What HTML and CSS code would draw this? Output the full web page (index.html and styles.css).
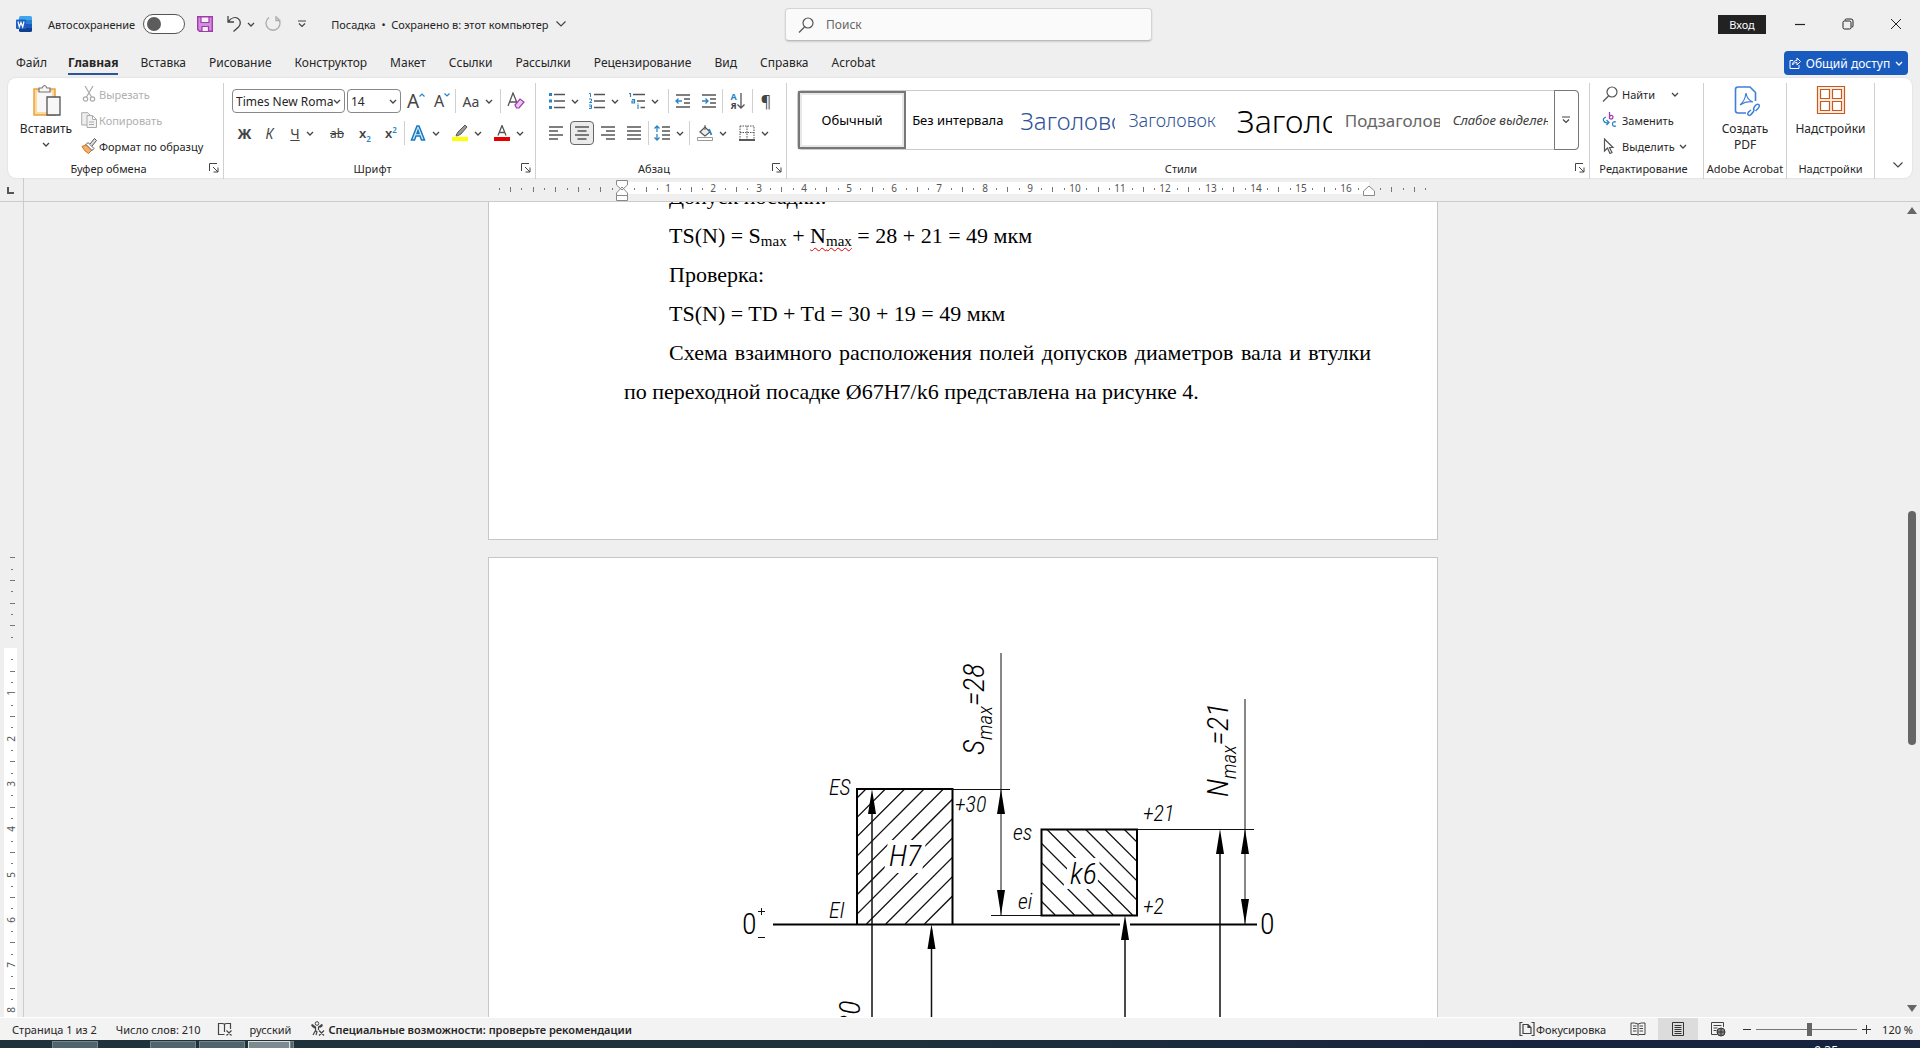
FILE: index.html
```
<!DOCTYPE html>
<html lang="ru">
<head>
<meta charset="utf-8">
<title>Посадка — Word</title>
<link rel="stylesheet" href="styles.css">
</head>
<body>
<svg class="defs" aria-hidden="true">
  <symbol id="chev" viewBox="0 0 8 5"><path d="M1 1l3 3 3-3" fill="none" stroke="#444" stroke-width="1.3"/></symbol>
  <symbol id="launch" viewBox="0 0 10 10"><path d="M.5 8V.5H8M4 4l5 5M9 4.500V9H4.500" fill="none" stroke="#444"/></symbol>
  <symbol id="lens" viewBox="0 0 16 16"><circle cx="10" cy="6" r="5" fill="none" stroke="#555" stroke-width="1.200"/><path d="M6.500 10L1 15.500" stroke="#555" stroke-width="1.300"/></symbol>
</svg>

<header class="titlebar">
  <svg class="ic16" viewBox="0 0 16 16"><path d="M3 1.500Q3 0 4.500 0h10Q16 0 16 1.500V5H3z" fill="#41a5ee"/><path d="M3 4h13v4H3z" fill="#2b7cd3"/><path d="M3 8h13v4H3z" fill="#185abd"/><path d="M3 12h13v2.500q0 1.500-1.500 1.500h-10Q3 16 3 14.500z" fill="#103f91"/><rect y="3.500" width="10" height="9.500" rx="1" fill="#1d5fc0"/><path d="M2 5.500l1.300 5.500L5 6.500 6.700 11 8 5.500" fill="none" stroke="#fff" stroke-width="1.200"/></svg>
  <label class="autosave">Автосохранение <input type="checkbox" class="toggle"></label>
  <button class="tb save" aria-label="Сохранить"><svg class="ic16" viewBox="0 0 16 16"><path d="M.7.700h14.600v14.600H2.500L.7 13.500z" fill="#d08fdc" stroke="#a03bab" stroke-width="1.400"/><path d="M4 1h8v5.500H4zM5 10.500h6.500v5H5z" fill="#f7f0f8" stroke="#a03bab" stroke-width="1.200"/></svg></button>
  <button class="tb undo" aria-label="Отменить"><svg class="ic16" viewBox="0 0 16 16"><path d="M2 0v6h6M2 6C5 2 9 .5 12 2.500s3 6 .5 8.500L7.500 15.500" fill="none" stroke="#444" stroke-width="1.300"/></svg><svg class="chev"><use href="#chev"/></svg></button>
  <button class="tb redo" aria-label="Повторить"><svg class="ic16" viewBox="0 0 16 16"><path d="M11 0v4.500h4.500M12 1.500A7 7 0 1 1 4 1.500" fill="none" stroke="#aaa" stroke-width="1.300"/></svg></button>
  <button class="tb custom" aria-label="Настройка панели"><svg class="ic8" viewBox="0 0 8 8"><path d="M0 1h8M1 3.500l3 3 3-3" fill="none" stroke="#444" stroke-width="1.200"/></svg></button>
  <button class="tb doc-title">Посадка&nbsp; •&nbsp; Сохранено в: этот компьютер <svg class="chev-lg" viewBox="0 0 10 6"><path d="M.5.500L5 5 9.500.500" fill="none" stroke="#444" stroke-width="1.200"/></svg></button>
  <label class="search"><svg class="ic16"><use href="#lens"/></svg><input type="text" placeholder="Поиск" aria-label="Поиск"></label>
  <div class="win">
    <button class="login">Вход</button>
    <button class="wbtn" aria-label="Свернуть"><svg class="ic12" viewBox="0 0 12 12"><path d="M1 6.500h10" stroke="#222" stroke-width="1.200"/></svg></button>
    <button class="wbtn" aria-label="Окно"><svg class="ic12" viewBox="0 0 12 12"><path d="M3 2.500V2Q3 1 4.500 1H9q2 0 2 2v5q0 1.200-1.500 1.200" fill="none" stroke="#222"/><rect x="1" y="3" width="8" height="8" rx="1.500" fill="none" stroke="#222"/></svg></button>
    <button class="wbtn" aria-label="Закрыть"><svg class="ic12" viewBox="0 0 12 12"><path d="M1 1l10 10M11 1L1 11" stroke="#222"/></svg></button>
  </div>
</header>

<nav class="tabs">
  <a href="#">Файл</a><a href="#" class="on">Главная</a><a href="#">Вставка</a><a href="#">Рисование</a><a href="#">Конструктор</a><a href="#">Макет</a><a href="#">Ссылки</a><a href="#">Рассылки</a><a href="#">Рецензирование</a><a href="#">Вид</a><a href="#">Справка</a><a href="#">Acrobat</a>
  <button class="share"><svg class="ic12" viewBox="0 0 12 12"><path d="M4 3.500H1v8h9V8M3.500 8c0-3 2-4.500 4.500-4.500V1l3.500 3.500L8 8V5.500C6 5.500 4.500 6 3.500 8z" fill="none" stroke="#fff"/></svg>Общий доступ<svg class="chev" viewBox="0 0 8 5"><path d="M1 1l3 3 3-3" fill="none" stroke="#fff" stroke-width="1.300"/></svg></button>
</nav>

<section class="ribbon">
  <div class="group">
    <div class="clip">
      <button class="big paste"><svg class="ic36" viewBox="0 0 36 36"><path d="M6 6h21v26H6z" fill="#fdd9a0" stroke="#e8a33d" stroke-width="1.500"/><path d="M9 9h15v20H9z" fill="#f7f7f7"/><path d="M11 9V5h3q2.500-5 5 0h3v4z" fill="#f5f5f5" stroke="#777" stroke-width="1.200"/><path d="M19 14h13v18H19z" fill="#f7f7f7" stroke="#555" stroke-width="1.300"/></svg><span>Вставить</span><svg class="chev"><use href="#chev"/></svg></button>
      <div class="stack">
        <button class="sm off"><svg class="ic16" viewBox="0 0 16 16"><path d="M4 0l6.500 11M12 0L5.500 11" stroke="#aaa" stroke-width="1.200"/><circle cx="4.500" cy="13" r="2.200" fill="none" stroke="#aaa" stroke-width="1.200"/><circle cx="11.500" cy="13" r="2.200" fill="none" stroke="#aaa" stroke-width="1.200"/></svg>Вырезать</button>
        <button class="sm off"><svg class="ic16" viewBox="0 0 16 16"><path d="M6 13H.7V.7H7L9 3" fill="#eee" stroke="#aaa"/><path d="M6 3.500h5.500l4 4V15.500H6zM11.500 3.500v4h4M8 10h5M8 12.500h5" fill="#f2f2f2" stroke="#aaa"/></svg>Копировать</button>
        <button class="sm"><svg class="ic16" viewBox="0 0 16 16"><path d="M1 8.500L7 6l5 5-4.500 4.500Q3 13 1 8.500z" fill="#f5b067" stroke="#d9731a"/><path d="M5 6.500l2-2 6 6-2 2z" fill="#fff" stroke="#555"/><path d="M9 6l4.500-5.500 2 2L11 8" fill="#ddd" stroke="#555"/></svg>Формат по образцу</button>
      </div>
    </div>
    <div class="cap"><span>Буфер обмена</span><button aria-label="Параметры буфера"><svg><use href="#launch"/></svg></button></div>
  </div>

  <div class="group">
    <div class="rows">
      <div class="row">
        <label class="combo font"><input type="text" value="Times New Roman" aria-label="Шрифт"><svg class="chev"><use href="#chev"/></svg></label>
        <label class="combo size"><input type="text" value="14" aria-label="Размер"><svg class="chev"><use href="#chev"/></svg></label>
        <button class="b w26" aria-label="Увеличить"><span class="l20">A</span><svg class="caret" viewBox="0 0 6 4"><path d="M.5 3.500L3 1l2.500 2.500" fill="none" stroke="#2b83c4" stroke-width="1.200"/></svg></button>
        <button class="b w26" aria-label="Уменьшить"><span class="l16">A</span><svg class="caret" viewBox="0 0 6 4"><path d="M.5.500L3 3 5.500.500" fill="none" stroke="#2b83c4" stroke-width="1.200"/></svg></button>
        <i class="sep"></i>
        <button class="b w44"><span class="l14">Aa</span><svg class="chev"><use href="#chev"/></svg></button>
        <i class="sep"></i>
        <button class="b w30" aria-label="Очистить"><svg class="ic18" viewBox="0 0 18 18"><path d="M1 14L6 1l4.500 11M3 10h6" fill="none" stroke="#555" stroke-width="1.300"/><path d="M8 13l5-6 4 3-5 6H9.500z" fill="#e9c6ef" stroke="#a03bab" stroke-width="1.200"/></svg></button>
      </div>
      <div class="row">
        <button class="b w25"><b class="l14">Ж</b></button>
        <button class="b w25"><em class="l14">К</em></button>
        <button class="b w40"><u class="l14">Ч</u><svg class="chev"><use href="#chev"/></svg></button>
        <button class="b w30"><s class="l12">ab</s></button>
        <button class="b w26"><span class="l13">x<sub>2</sub></span></button>
        <button class="b w26"><span class="l13">x<sup>2</sup></span></button>
        <i class="sep"></i>
        <button class="b w40" aria-label="Эффекты"><svg class="ic16" viewBox="0 0 16 16"><path d="M1.500 15L7 1h2l5.500 14h-3L10 11H6l-1.500 4zM7 8.500h2L8 5.500z" fill="#d4eafa" stroke="#1878be" stroke-width="1.500"/></svg><svg class="chev"><use href="#chev"/></svg></button>
        <button class="b w44" aria-label="Цвет выделения"><svg class="ic16" viewBox="0 0 16 16"><path d="M4 10.500L6 7l7-7 2 2-6 7-4 2z" fill="#999" stroke="#555"/><path d="M0 12h16v4H0z" fill="#ff0"/></svg><svg class="chev"><use href="#chev"/></svg></button>
        <button class="b w40" aria-label="Цвет текста"><svg class="ic16" viewBox="0 0 16 16"><path d="M4 10.500L8 .5l4 10M5.500 7.500h5" fill="none" stroke="#555" stroke-width="1.300"/><path d="M0 12h16v4H0z" fill="#e80000"/></svg><svg class="chev"><use href="#chev"/></svg></button>
      </div>
    </div>
    <div class="cap"><span>Шрифт</span><button aria-label="Параметры шрифта"><svg><use href="#launch"/></svg></button></div>
  </div>

  <div class="group">
    <div class="rows">
      <div class="row">
        <button class="b w40" aria-label="Маркеры"><svg class="ic16" viewBox="0 0 16 16"><path d="M0 0h3v3H0zM0 6.500h3v3H0zM0 13h3v3H0z" fill="#2b83c4"/><path d="M5 1.500h11M5 8h11M5 14.500h11" stroke="#555" stroke-width="1.300"/></svg><svg class="chev"><use href="#chev"/></svg></button>
        <button class="b w40" aria-label="Нумерация"><svg class="ic16" viewBox="0 0 16 16"><path d="M0 .5h1.500V4M0 6h2.500v2L.5 9.500h2.500M0 12h2.500v3.500H0M.5 13.700h2" fill="none" stroke="#2b83c4"/><path d="M5 1.500h11M5 8h11M5 14.500h11" stroke="#555" stroke-width="1.300"/></svg><svg class="chev"><use href="#chev"/></svg></button>
        <button class="b w40" aria-label="Многоуровневый список"><svg class="ic16" viewBox="0 0 16 16"><path d="M0 .5h1.500V4M3 6.500h2.500V10H3V8h2.500M9 12v4M9 10.500v1" fill="none" stroke="#2b83c4" stroke-width="1.200"/><path d="M4 1.500h12M8 8h8M11.500 14.500H16" stroke="#555" stroke-width="1.300"/></svg><svg class="chev"><use href="#chev"/></svg></button>
        <i class="sep gap"></i>
        <button class="b w26" aria-label="Уменьшить отступ"><svg class="ic16" viewBox="0 0 16 16"><path d="M1 2h14M9 6h6M9 10h6M1 14h14" stroke="#555" stroke-width="1.300"/><path d="M7 8H1M3.500 5.500L1 8l2.500 2.500" fill="none" stroke="#2b83c4" stroke-width="1.300"/></svg></button>
        <button class="b w26" aria-label="Увеличить отступ"><svg class="ic16" viewBox="0 0 16 16"><path d="M1 2h14M9 6h6M9 10h6M1 14h14" stroke="#555" stroke-width="1.300"/><path d="M1 8h6M4.500 5.500L7 8l-2.500 2.500" fill="none" stroke="#2b83c4" stroke-width="1.300"/></svg></button>
        <i class="sep"></i>
        <button class="b sort" aria-label="Сортировка"><span><b>А</b><b>Я</b></span><svg viewBox="0 0 8 16"><path d="M4 0v15M.5 11.500L4 15l3.500-3.500" fill="none" stroke="#555" stroke-width="1.300"/></svg></button>
        <i class="sep"></i>
        <button class="b w26"><span class="l16">¶</span></button>
      </div>
      <div class="row al">
        <button class="b w24" aria-label="По левому краю"><svg class="ic16" viewBox="0 0 16 16"><path d="M1 2h14M1 6h9M1 10h14M1 14h9" stroke="#555" stroke-width="1.300"/></svg></button>
        <button class="b w24 sel" aria-label="По центру"><svg class="ic16" viewBox="0 0 16 16"><path d="M1 2h14M3.500 6h9M1 10h14M3.500 14h9" stroke="#555" stroke-width="1.300"/></svg></button>
        <button class="b w24" aria-label="По правому краю"><svg class="ic16" viewBox="0 0 16 16"><path d="M1 2h14M6 6h9M1 10h14M6 14h9" stroke="#555" stroke-width="1.300"/></svg></button>
        <button class="b w24" aria-label="По ширине"><svg class="ic16" viewBox="0 0 16 16"><path d="M1 2h14M1 6h14M1 10h14M1 14h14" stroke="#555" stroke-width="1.300"/></svg></button>
        <i class="sep"></i>
        <button class="b w40" aria-label="Интервал"><svg class="ic16" viewBox="0 0 16 16"><path d="M8 2h8M8 6h8M8 10h8M8 14h8" stroke="#555" stroke-width="1.300"/><path d="M3 1v6M3 9v6M.5 3.500L3 1l2.500 2.500M.5 12.500L3 15l2.500-2.500" fill="none" stroke="#2b83c4" stroke-width="1.300"/></svg><svg class="chev"><use href="#chev"/></svg></button>
        <i class="sep"></i>
        <button class="b w44" aria-label="Заливка"><svg class="ic16" viewBox="0 0 16 16"><path d="M3 7l5-5 5 5-5 4z" fill="#eee" stroke="#555" stroke-width="1.200"/><path d="M8 0v5" stroke="#555"/><path d="M12 4l2.500 6" stroke="#2b83c4" stroke-width="1.800"/><path d="M.5 12.500h15v3H.5z" fill="#fff" stroke="#999"/></svg><svg class="chev"><use href="#chev"/></svg></button>
        <button class="b w40" aria-label="Границы"><svg class="ic16" viewBox="0 0 16 16"><path d="M1 1h14v13M1 1v13M8 1v13M1 7.500h14" fill="none" stroke="#555" stroke-dasharray="1.500 1"/><path d="M0 15h16" stroke="#222" stroke-width="1.500"/></svg><svg class="chev"><use href="#chev"/></svg></button>
      </div>
    </div>
    <div class="cap"><span>Абзац</span><button aria-label="Параметры абзаца"><svg><use href="#launch"/></svg></button></div>
  </div>

  <div class="group styles-group">
    <div class="gallery">
      <button class="st on"><span>Обычный</span></button>
      <button class="st"><span>Без интервала</span></button>
      <button class="st h1"><span>Заголовок</span></button>
      <button class="st h2"><span>Заголовок</span></button>
      <button class="st ttl"><span>Заголовок</span></button>
      <button class="st sub"><span>Подзаголовок</span></button>
      <button class="st em"><span>Слабое выделение</span></button>
      <button class="more" aria-label="Ещё"><svg class="ic8" viewBox="0 0 8 8"><path d="M0 1h8M1 3.500l3 3 3-3" fill="none" stroke="#444" stroke-width="1.200"/></svg></button>
    </div>
    <div class="cap"><span>Стили</span><button aria-label="Окно стилей"><svg><use href="#launch"/></svg></button></div>
  </div>

  <div class="group">
    <div class="stack edit">
      <button class="sm find"><svg class="ic16"><use href="#lens"/></svg>Найти<svg class="chev"><use href="#chev"/></svg></button>
      <button class="sm"><svg class="ic16" viewBox="0 0 16 16"><path d="M7.500 0v7M7.500 4.500q1-1.500 2.500-1 1.500.8.800 2.500T7.500 6.500" fill="none" stroke="#a03bab" stroke-width="1.300"/><path d="M4 5Q0 6.500 2 9.500q1.500 2 4.500 1M4.500 8l2.500 2.500L4.500 13M14 10q-3.500-1-3.500 2t3.500 2" fill="none" stroke="#2b83c4" stroke-width="1.300"/></svg>Заменить</button>
      <button class="sm"><svg class="ic16" viewBox="0 0 16 16"><path d="M2.500 1v12l3-3 2.500 5.500 2-1L7.500 9.500H11z" fill="#fff" stroke="#555" stroke-width="1.200"/></svg>Выделить<svg class="chev"><use href="#chev"/></svg></button>
    </div>
    <div class="cap plain"><span>Редактирование</span></div>
  </div>

  <div class="group">
    <button class="big pdf"><svg class="ic36" viewBox="0 0 36 36"><path d="M17 30H9q-2.500 0-2.500-2.500V6.500Q6.500 4 9 4h12l5.500 5.500V18" fill="none" stroke="#3f7fd6" stroke-width="1.600"/><path d="M11 22q5-4 6-12 1 7 7 9-6-1.500-13 3z" fill="none" stroke="#3f7fd6" stroke-width="1.200"/><path d="M22 27l-2.500 2q-2 3 1 3.500 1 0 4-4 1-2-.5-3M25 27q-1-1.500 1-4t3.500-1.500q2 1-.5 4l-2.500 2.500" fill="none" stroke="#3f7fd6" stroke-width="1.500"/></svg><span>Создать<br>PDF</span></button>
    <div class="cap wide"><span>Adobe Acrobat</span></div>
  </div>

  <div class="group">
    <button class="big"><svg class="ic36" viewBox="0 0 36 36"><path d="M4.500 3.500h27v27h-27z" fill="#fdebdd" stroke="#c55a22" stroke-width="1.200"/><path d="M7.500 6.500h9v9h-9zM19.500 6.500h9v9h-9zM7.500 18.500h9v9h-9zM19.500 18.500h9v9h-9z" fill="#fff" stroke="#c55a22" stroke-width="1.200"/></svg><span>Надстройки</span></button>
    <div class="cap wide"><span>Надстройки</span></div>
  </div>
  <div class="collapse"><button aria-label="Свернуть ленту"><svg class="chev-lg" viewBox="0 0 10 6"><path d="M.5.500L5 5 9.500.500" fill="none" stroke="#444" stroke-width="1.200"/></svg></button></div>
</section>

<div class="hruler">
  <div class="corner"><svg viewBox="0 0 8 8"><path d="M1 0v6h6" fill="none" stroke="#555" stroke-width="2"/></svg></div>
  <svg id="hr" class="hscale"></svg>
</div>

<main class="work">
  <svg id="vr" class="vruler"></svg>
  <div class="canvas">
    <article class="page first">
      <p>Допуск посадки:</p>
      <p>TS(N) = S<sub>max</sub> + <span class="typo">N<sub>max</sub></span> = 28 + 21 = 49 мкм</p>
      <p>Проверка:</p>
      <p>TS(N) = TD + Td = 30 + 19 = 49 мкм</p>
      <p>Схема взаимного расположения полей допусков диаметров вала и втулки по переходной посадке Ø67H7/k6 представлена на рисунке 4.</p>
    </article>
    <article class="page second">
      <svg class="scheme" viewBox="718 641 560 420" role="img" aria-label="Схема полей допусков">
        <defs>
          <clipPath id="ch"><path d="M857 789h95v135h-95z"/></clipPath>
          <clipPath id="ck"><path d="M1042 829h95v86h-95z"/></clipPath>
        </defs>
        <path id="hatchH" clip-path="url(#ch)" class="hatch"/>
        <path id="hatchK" clip-path="url(#ck)" class="hatch"/>
        <path d="M888 840h38l-4 33h-38zM1069 858h31l-3 31h-34z" fill="#fff"/>
        <path class="thick" d="M857 924V789h95.500v135M1041.500 829.500H1137v86h-95.500zM773 924.500h347M1130 924.500h127"/>
        <path class="thin" d="M952 789.500h58M1001 653v262M991 915.500h50M1137 829.500h117M1245 699v225"/>
        <path class="mid" d="M872 800v260M931.500 930v130M1125 925v135M1220 840v220"/>
        <path fill="#000" d="M872 789l4 25h-8zM1001 789l4 25h-8zM1001 915l4-25h-8zM931.500 924l4 25h-8zM1125 915l4 25h-8zM1220 829l4 25h-8zM1245 829l4 25h-8zM1245 924l4-25h-8z"/>
        <g class="s22">
          <text x="829" y="795">ES</text><text x="829" y="918">EI</text>
          <text x="955" y="812">+30</text><text x="1013" y="840">es</text><text x="1018" y="909">ei</text>
          <text x="1143" y="821">+21</text><text x="1143" y="914">+2</text>
        </g>
        <g class="s32">
          <text x="889" y="866">H7</text><text x="1070" y="884">k6</text>
          <text class="up" x="742" y="934">0</text><text class="up" x="1260" y="934">0</text>
          <text transform="translate(984 755) rotate(-90)">S<tspan class="ix" dy="8">max</tspan><tspan dy="-8">=28</tspan></text>
          <text transform="translate(1228 797) rotate(-90)">N<tspan class="ix" dy="8">max</tspan><tspan dy="-8">=21</tspan></text>
          <text transform="translate(860 1029) rotate(-90)">30</text>
        </g>
        <path class="thin" d="M758 911.500h7M761.500 908v7M758 937.500h7"/>
      </svg>
    </article>
  </div>
  <div class="scroll">
    <svg viewBox="0 0 10 7"><path d="M5 0l5 7H0z" fill="#666"/></svg>
    <i class="above"></i><i class="thumb"></i><i class="below"></i>
    <svg viewBox="0 0 10 7"><path d="M5 7l5-7H0z" fill="#666"/></svg>
  </div>
</main>

<footer class="status">
  <span class="s-page">Страница 1 из 2</span>
  <span class="s-words">Число слов: 210</span>
  <svg class="ic16" viewBox="0 0 16 16"><path d="M7.500 13.500H1.500v-11h4q2 0 2 1.500 0-1.500 2-1.500h4V8M7.500 4v7M9.500 9.500l5 5M14.500 9.500l-5 5" fill="none" stroke="#444" stroke-width="1.200"/></svg>
  <span class="s-lang">русский</span>
  <svg class="ic16" viewBox="0 0 16 16"><circle cx="7" cy="2.500" r="1.800" fill="none" stroke="#444"/><path d="M2 3.500L5.500 6v3.500L3 14M12 3.500L8.500 6v3M2 3.500Q1 5 5 7M12 3.500q1 1.500-2.500 3M5.500 9.500L7 11l-1 3M9 9.500l5 5M14 9.500l-5 5" fill="none" stroke="#444" stroke-width="1.200"/></svg>
  <b class="s-acc">Специальные возможности: проверьте рекомендации</b>
  <div class="right">
    <button class="focus"><svg class="ic16" viewBox="0 0 16 16"><path d="M3.500 1.500H1v13h2.500M12.500 14.500H15v-13h-2.500M4 3.500h5l3 3v6H4zM9 3.500v3h3" fill="none" stroke="#444" stroke-width="1.200"/></svg>Фокусировка</button>
    <button class="view" aria-label="Чтение"><svg class="ic16" viewBox="0 0 16 16"><path d="M8 3v11M8 3Q5 1.500 1 2v11.500h6l1 1 1-1h6V2q-4-.5-7 1M3 5h3.500M3 7.500h3.500M3 10h3.500M9.500 5H13M9.500 7.500H13M9.500 10H13" fill="none" stroke="#444"/></svg></button>
    <button class="view on" aria-label="Разметка"><svg class="ic16" viewBox="0 0 16 16"><path d="M2.500 1.500h11v13h-11zM4.500 4.500h7M4.500 6.500h7M4.500 8.500h7M4.500 10.500h7M4.500 12.500h7" fill="none" stroke="#333"/></svg></button>
    <button class="view" aria-label="Веб"><svg class="ic16" viewBox="0 0 16 16"><path d="M7 13.500H1.500v-12h12V6M3.500 4.500h8M3.500 7h4M3.500 9.500h3" fill="none" stroke="#444"/><circle cx="11" cy="11" r="4" fill="#888" stroke="#333"/><path d="M7 11h8M11 7v8" stroke="#333"/></svg></button>
    <button class="zb" aria-label="Мельче"><svg class="ic12" viewBox="0 0 12 12"><path d="M2 6.500h8" stroke="#333"/></svg></button>
    <input type="range" class="zoom" min="0" max="100" value="53" aria-label="Масштаб">
    <button class="zb" aria-label="Крупнее"><svg class="ic12" viewBox="0 0 12 12"><path d="M2 6.500h9M6.500 2v9" stroke="#333"/></svg></button>
    <span class="pct">120 %</span>
  </div>
</footer>
<div class="taskbar"><i></i><i></i><i></i><i class="cur"></i><i class="edge"></i><span>9:35</span></div>
<script src="rulers.js"></script>
</body>
</html>
```
FILE: rulers.js
```
// Draws the centimetre scales of the two rulers and the hatching of the tolerance zones.
(function () {
  var h = '<path d="M135 4h746v12H135z" fill="#fff"/>';
  var zero = 135, cm = 45.2;
  for (var q = -12; q <= 71; q++) {
    var x = Math.round(zero + q * cm / 4);
    if (q === 0 || q === 66) continue;
    if (q % 4 === 0 && q > 0 && q < 66) {
      h += '<text x="' + x + '" y="14" text-anchor="middle">' + q / 4 + '</text>';
    } else if (q % 2 === 0) {
      h += '<path d="M' + (x + 0.5) + ' 9v5"/>';
    } else {
      h += '<path d="M' + (x + 0.5) + ' 10v2"/>';
    }
  }
  h += '<g fill="#fff"><path d="M128.500 2.500h11V7L134 12l-5.500-5zM128.500 17.500V15L134 9l5.500 6v2.500zM128.500 17.500h11v5h-11zM875.500 17.500V13l5.500-5 5.500 5v4.500z"/></g>';
  document.getElementById('hr').innerHTML = h;

  var v = '<path d="M4 446h13v370H4z" fill="#fff"/>';
  var vz = 446, vcm = 45.3;
  for (q = -8; q <= 32; q++) {
    var y = Math.round(vz + q * vcm / 4);
    if (q === 0) continue;
    if (q % 4 === 0 && q > 0) {
      v += '<text transform="translate(15 ' + y + ') rotate(-90)" text-anchor="middle">' + q / 4 + '</text>';
    } else if (q % 2 === 0) {
      v += '<path d="M10 ' + (y + 0.5) + 'h5"/>';
    } else {
      v += '<path d="M11 ' + (y + 0.5) + 'h2"/>';
    }
  }
  document.getElementById('vr').innerHTML = v;

  var d = '', i;
  for (i = 0; i < 12; i++) {
    var c = 1655 + (i - 1) * 19.35;
    d += 'M' + (c - 924) + ' 924L' + (c - 789) + ' 789';
  }
  document.getElementById('hatchH').setAttribute('d', d);
  d = '';
  for (i = -5; i < 5; i++) {
    c = 217.5 + i * 19.35;
    d += 'M' + (c + 829) + ' 829l86 86';
  }
  document.getElementById('hatchK').setAttribute('d', d);
})();
```
FILE: styles.css
```
* { box-sizing: border-box; }
body { margin: 0; height: 100vh; display: flex; flex-direction: column; overflow: hidden; background: #efefef; color: #262626; font: 12px "Noto Sans", sans-serif; }
button { border: 0; background: none; padding: 0; margin: 0; font: inherit; color: inherit; display: inline-flex; align-items: center; }
input { font: inherit; color: inherit; }
a { color: inherit; text-decoration: none; }
svg { display: block; flex: none; }
.defs { position: absolute; width: 0; height: 0; }
.ic8 { width: 8px; height: 8px; }
.ic12 { width: 12px; height: 12px; }
.ic16 { width: 16px; height: 16px; }
.ic18 { width: 18px; height: 18px; }
.ic36 { width: 36px; height: 36px; }
.chev { width: 8px; height: 5px; }
.chev-lg { width: 10px; height: 6px; }

.titlebar { position: relative; height: 48px; flex: none; display: flex; align-items: center; padding-left: 16px; font-size: 11px; }
.autosave { display: flex; align-items: center; gap: 8px; margin-left: 16px; }
.toggle { appearance: none; width: 42px; height: 20px; margin: 0; border: 1px solid #555; border-radius: 10px; background: #fff; display: flex; align-items: center; padding-left: 3px; }
.toggle::before { content: ""; width: 14px; height: 14px; border-radius: 50%; background: #5c5c5c; }
.save { margin-left: 12px; }
.undo { margin-left: 13px; gap: 5px; }
.redo { margin-left: 10px; }
.custom { margin-left: 17px; }
.doc-title { margin-left: 25px; gap: 8px; }
.search { position: absolute; left: 50%; top: 8px; width: 367px; height: 33px; margin-left: -175px; background: #fafafa; border: 1px solid #d4d4d4; border-bottom-color: #bbb; border-radius: 4px; box-shadow: 0 1px 2px #0002; display: flex; align-items: center; padding: 0 12px; gap: 12px; font-size: 12px; }
.search input { border: 0; background: none; flex: 1; padding: 0; outline: 0; }
.search input::placeholder { color: #666; }
.win { margin-left: auto; display: flex; align-items: center; }
.login { width: 48px; height: 19px; justify-content: center; background: #222; color: #fff; margin-right: 10px; }
.wbtn { width: 48px; height: 32px; justify-content: center; }

.tabs { height: 30px; flex: none; display: flex; align-items: center; gap: 23px; padding: 0 12px 0 16px; }
.tabs a { line-height: 20px; margin-top: 2px; border-bottom: 2px solid transparent; }
.tabs .on { font-weight: 700; border-color: #2b579a; margin-left: -2px; margin-right: -1px; }
.share { margin-left: auto; width: 124px; height: 24px; justify-content: center; gap: 5px; background: #185abd; color: #fff; border-radius: 4px; }

.ribbon { flex: none; margin: 0 8px; height: 100px; background: #fff; border-radius: 8px; display: grid; grid-template-columns: 216px 312px 251px 1fr 114px 83px 88px 37px; box-shadow: 0 0 2px #0002; }
.group { display: flex; flex-direction: column; min-width: 0; margin: 5px 0; border-right: 1px solid #d0d0d0; }
.cap { display: grid; grid-template-columns: 1fr 14px; align-items: center; margin: auto 0 2px; height: 18px; font-size: 11px; }
.cap span { text-align: center; white-space: nowrap; }
.cap.plain { grid-template-columns: 1fr 6px; }
.cap.wide { display: flex; justify-content: center; }
.cap svg { width: 10px; height: 10px; }
.clip { display: flex; }
.big { flex-direction: column; line-height: 16px; text-align: center; white-space: nowrap; }
.big .ic36 { margin-bottom: 2px; }
.pdf .ic36 { margin-left: 4px; }
.paste { width: 70px; margin-left: 3px; }
.paste .chev { margin-top: 5px; }
.stack { display: flex; flex-direction: column; align-items: flex-start; margin-top: -2px; }
.sm { height: 26px; gap: 4px; white-space: nowrap; font-size: 11px; }
.clip .sm { gap: 2px; }
.find .chev { margin-left: 12px; }
.edit { padding-left: 12px; }
.off { color: #b0b0b0; }

.rows { display: flex; flex-direction: column; gap: 8px; padding: 6px 0 0 8px; }
.row { display: flex; height: 24px; align-items: center; }
.al .w24 { margin-right: 2px; }
.sep { width: 1px; height: 24px; background: #d0d0d0; flex: none; }
.gap { margin: 0 1px 0 4px; }
.combo { height: 24px; border: 1px solid #888; border-radius: 4px; display: flex; align-items: center; padding: 0 3px; }
.combo input { border: 0; padding: 0; outline: 0; background: none; flex: 1; min-width: 0; }
.font { width: 113px; margin-right: 2px; }
.size { width: 54px; margin-right: 2px; }
.b { height: 24px; justify-content: center; color: #444; flex: none; gap: 6px; }
.w24 { width: 24px; } .w25 { width: 25px; } .w26 { width: 26px; } .w30 { width: 30px; } .w40 { width: 40px; } .w44 { width: 44px; }
.sel { border: 1px solid #666; border-radius: 4px; background: #ebebeb; }
.caret { width: 6px; height: 4px; align-self: flex-start; margin: 4px 0 0 -6px; }
.l20 { font-size: 19px; } .l16 { font-size: 16px; } .l14 { font-size: 14px; } .l13 { font-size: 13px; font-weight: 600; } .l12 { font-size: 12px; }
.l13 sub, .l13 sup { font-size: 8px; line-height: 0; color: #2b83c4; }
.sort { width: 29px; gap: 0; }
.sort span { display: flex; flex-direction: column; font-size: 9px; line-height: 9px; }
.sort b:first-child { color: #2b83c4; }
.sort svg { width: 8px; height: 18px; }

.gallery { display: flex; height: 60px; margin: 7px 10px 0; border: 1px solid #ccc; border-radius: 4px; color: #000; font-size: 13px; }
.st { flex: 1 1 108px; min-width: 0; padding: 0 7px 0 6px; }
.st span { display: block; width: 100%; overflow: hidden; white-space: nowrap; text-align: left; }
.st.on { border: 2px solid #777; padding: 0; box-shadow: inset 0 0 0 2px #e8e8e8; }
.st.on span { text-align: center; }
.h1 { font-size: 24px; font-weight: 300; color: #2f5496; }
.h2 { font-size: 18px; font-weight: 300; color: #2f5496; }
.ttl { font-size: 32px; font-weight: 300; }
.sub { font-size: 17px; color: #666; }
.em { font-style: italic; color: #404040; }
.more { width: 25px; justify-content: center; border: 1px solid #777; border-radius: 0 4px 4px 0; margin: -1px; flex: none; }
.collapse { display: flex; align-items: flex-end; justify-content: center; padding: 0 0 16px 8px; }

.hruler { flex: none; height: 24px; display: flex; border-bottom: 1px solid #ccc; padding-right: 18px; }
.corner { width: 24px; border-right: 1px solid #ccc; padding: 9px 0 0 7px; }
.corner svg { width: 8px; height: 8px; }
.hscale { width: 950px; height: 23px; margin: 0 auto; }
.hscale path, .vruler path { stroke: #777; }
.hscale path:first-child, .vruler path:first-child { stroke: none; }
.hscale g path:first-child { stroke: #888; }
.hscale text, .vruler text { font-size: 10px; fill: #555; }

.work { flex: 1; min-height: 0; display: flex; overflow: hidden; }
.vruler { width: 24px; height: 100%; border-right: 1px solid #ccc; }
.canvas { flex: 1; overflow: hidden; display: flex; flex-direction: column; align-items: center; padding-right: 1px; }
.page { flex: none; width: 950px; background: #fff; border: 1px solid #c6c6c6; padding: 0 66px 0 135px; }
.first { margin-top: -100px; padding-top: 74px; padding-bottom: 128px; font: 22px/39px "Liberation Serif", serif; color: #000; text-align: justify; }
.page p { margin: 0; text-indent: 45px; }
.page sub { font-size: 15px; line-height: 0; vertical-align: -3px; }
.typo { text-decoration: underline wavy #e00000 1px; text-decoration-skip-ink: none; text-underline-offset: 4px; }
.second { margin-top: 17px; padding-top: 83px; }
.scheme { width: 560px; height: 420px; margin-left: 94px; font: italic 300 22px "Roboto Condensed", Roboto, sans-serif; }
.s32 { font-size: 30px; }
.up { font-style: normal; }
.ix { font-size: 21px; }
.thin { fill: none; stroke: #111; stroke-width: 1px; }
.hatch { fill: none; stroke: #111; stroke-width: 1.3px; }
.mid { fill: none; stroke: #111; stroke-width: 1.5px; }
.thick { fill: none; stroke: #000; stroke-width: 2px; }

.scroll { width: 17px; display: flex; flex-direction: column; align-items: center; padding: 5px 0; }
.scroll svg { width: 10px; height: 7px; }
.above { flex: 294; }
.thumb { flex: 232; width: 8px; border-radius: 4px; background: #666; }
.below { flex: 258; }

.status { flex: none; height: 23px; border-top: 1px solid #fff; background: #f3f3f3; display: flex; align-items: center; padding: 0 7px 0 12px; font-size: 11px; white-space: nowrap; }
.s-words { margin: 0 16px 0 19px; }
.s-lang { margin: 0 19px 0 17px; }
.s-acc { margin-left: 2px; font-weight: 600; }
.right { margin-left: auto; display: flex; align-items: center; height: 100%; }
.focus { gap: 1px; margin-right: 12px; }
.view { width: 40px; height: 100%; justify-content: center; }
.view.on { background: #dcdcdc; }
.zb { margin: 0 3px; }
.zoom { appearance: none; width: 101px; height: 14px; margin: 0; background: linear-gradient(#777, #777) center / 100% 1px no-repeat; }
.zoom::-webkit-slider-thumb { appearance: none; width: 5px; height: 13px; background: #666; }
.pct { margin-left: 7px; }

.taskbar { flex: none; height: 8px; background: linear-gradient(90deg, #1f323c, #1f323c 45%, #16233f 80%); display: flex; overflow: hidden; padding-left: 52px; }
.taskbar i { width: 46px; margin: 1px 3px 0 0; background: #50646b; border: 1px solid #75868b; border-bottom: 0; }
.taskbar i:first-child { margin-right: 52px; }
.taskbar .cur { width: 42px; margin-right: 0; background: #7d8b90; border-color: #ddd; }
.taskbar .edge { width: 4px; }
.taskbar span { margin: 2px 82px 0 auto; color: #fff; font-size: 12px; }
```
